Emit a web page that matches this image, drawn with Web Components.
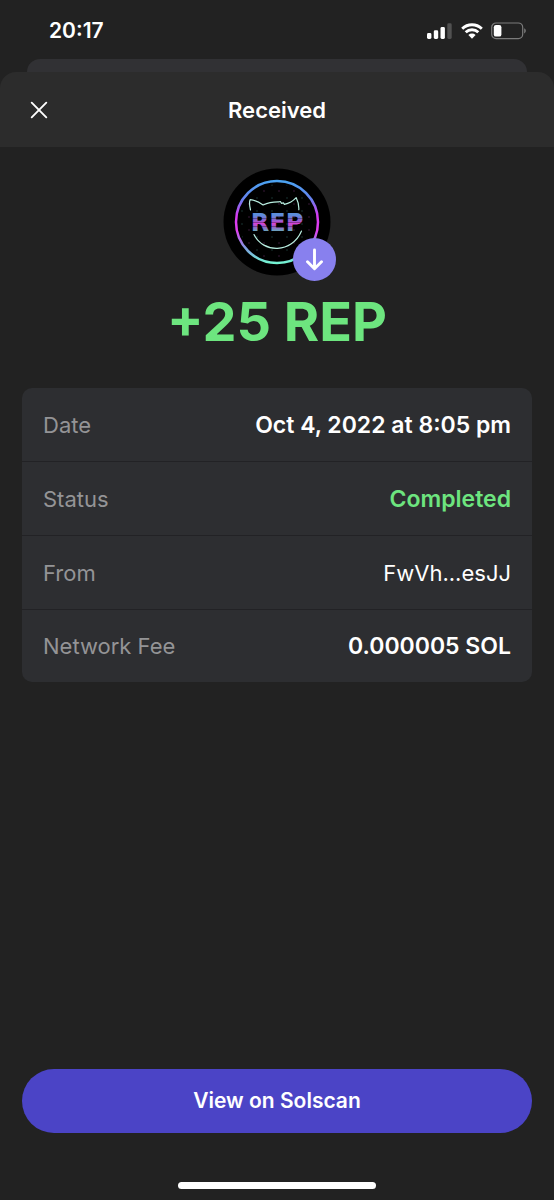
<!DOCTYPE html>
<html lang="en">
<head>
<meta charset="utf-8">
<meta name="viewport" content="width=device-width, initial-scale=1">
<title>Received</title>
<style>
  html { background: #222; }
  body {
    margin: 0;
    color: #fff;
    background: #222;
    font-family: Inter, "Liberation Sans", sans-serif;
    font-size: 22px;
    line-height: 28px;
    --green: #6de57f;
    --muted: #949496;
    --card: #2d2e31;
    --accent: #4b44c6;
  }
</style>
</head>
<body>
<wallet-screen>
  <status-bar slot="status">20:17</status-bar>
  <sheet-header slot="header">Received</sheet-header>
  <token-amount>+25 REP</token-amount>
  <transaction-details>
    <span slot="date">Oct 4, 2022 at 8:05 pm</span>
    <span slot="status">Completed</span>
    <span slot="from">FwVh...esJJ</span>
    <span slot="fee">0.000005 SOL</span>
  </transaction-details>
  <pill-button slot="footer">View on Solscan</pill-button>
</wallet-screen>

<script>
  const define = (name, html) => {
    const template = document.createElement('template');
    template.innerHTML = html;
    customElements.define(name, class extends HTMLElement {
      constructor() {
        super();
        this.attachShadow({ mode: 'open' }).append(template.content.cloneNode(true));
      }
    });
  };

  define('status-bar', `
    <style>
      :host { display: flex; align-items: center; justify-content: space-between; height: 59px; padding: 2px 28px 0 49px; box-sizing: border-box; font-size: 21px; font-weight: 600; }
      .icons { display: flex; align-items: center; gap: 8px; }
      svg { display: block; }
    </style>
    <time><slot></slot></time>
    <div class="icons">
      <svg width="26" height="16" viewBox="0 0 26 16" fill="#fff" aria-label="Signal">
        <rect x="0" y="10" width="4.400" height="6" rx="1.4"/>
        <rect x="6.8" y="7.3" width="4.400" height="8.7" rx="1.4"/>
        <rect x="13.5" y="4" width="4.400" height="12" rx="1.4"/>
        <rect x="20.3" y="0.3" width="4.400" height="15.7" rx="1.4" fill="#515151"/>
      </svg>
      <svg width="22" height="16" viewBox="0 0 22 16" aria-label="Wi-Fi">
        <g fill="none" stroke="#fff" stroke-width="2.9">
          <path d="M1.2 5.7a14 14 0 0 1 19.6 0"/>
          <path d="M4.7 9.3a9 9 0 0 1 12.6 0"/>
        </g>
        <path d="M7.4 12a5.2 5.2 0 0 1 7.2 0L11 15.8Z" fill="#fff"/>
      </svg>
      <svg width="35" height="18" viewBox="0 0 35 18" aria-label="Battery">
        <rect x="0.7" y="1" width="31" height="15.6" rx="4.4" fill="none" stroke="#7b7b7b" stroke-width="1.2"/>
        <rect x="2.8" y="3" width="7.6" height="11.6" rx="2.2" fill="#fff"/>
        <path d="M33.2 6.2v5.2c1-.4 1.6-1.400 1.600-2.600s-.6-2.200-1.600-2.600Z" fill="#7b7b7b"/>
      </svg>
    </div>
  `);

  define('sheet-header', `
    <style>
      :host { display: block; }
      .behind { height: 13px; margin: 0 27px; border-radius: 13px 13px 0 0; background: #313134; }
      header { display: grid; grid-template-columns: 78px 1fr 78px; align-items: center; height: 75px; border-radius: 16px 16px 0 0; background: #2c2c2c; }
      h1 { margin: 0; font: inherit; font-weight: 600; text-align: center; }
      button { display: grid; place-items: center; width: 78px; height: 75px; padding: 0; border: 0; background: none; cursor: pointer; }
    </style>
    <div class="behind"></div>
    <header>
      <button type="button" aria-label="Close">
        <svg width="18" height="18" viewBox="0 0 18 18" stroke="#fff" stroke-width="1.9" stroke-linecap="round"><path d="M1.700 1.700 16.300 16.300M16.300 1.700 1.700 16.300"/></svg>
      </button>
      <h1><slot></slot></h1>
    </header>
  `);

  define('token-logo', `
    <style>
      :host { display: block; position: relative; width: 108px; height: 108px; }
      svg { display: block; }
      .badge { position: absolute; right: -5px; bottom: -5px; }
    </style>
    <svg width="108" height="108" viewBox="0 0 108 108" role="img" aria-label="REP token">
      <defs>
        <linearGradient id="ring" x1="0" y1="0" x2="0" y2="1">
          <stop offset="0" stop-color="#4aa3f0"/><stop offset=".22" stop-color="#6681ee"/>
          <stop offset=".42" stop-color="#d53af0"/><stop offset=".6" stop-color="#e23ff0"/>
          <stop offset=".82" stop-color="#7d9ce0"/><stop offset="1" stop-color="#74f5d2"/>
        </linearGradient>
        <linearGradient id="word" gradientUnits="userSpaceOnUse" x1="0" y1="47" x2="0" y2="64">
          <stop offset="0" stop-color="#5c8edb"/><stop offset=".3" stop-color="#8a62cf"/>
          <stop offset=".5" stop-color="#d743d6"/><stop offset=".7" stop-color="#965fc9"/>
          <stop offset="1" stop-color="#5bb8b8"/>
        </linearGradient>
        <pattern id="dots" width="15" height="13" patternUnits="userSpaceOnUse">
          <circle cx="4" cy="4" r="1" fill="#10211f"/><circle cx="11" cy="10" r="1" fill="#241023"/>
        </pattern>
      </defs>
      <circle cx="54" cy="54" r="53.500" fill="#000"/>
      <circle cx="54" cy="54" r="38" fill="url(#dots)"/>
      <circle cx="54" cy="54" r="41" fill="none" stroke="url(#ring)" stroke-width="2.500"/>
      <g fill="none" stroke="#b8eee0" stroke-width="1.200" stroke-linecap="round" stroke-linejoin="round">
        <path d="M27.500 42c-1-4-1.600-7-.4-10.300 4 .3 9 2.300 13 5.300 5-2.400 10-3.300 15.500-3.200l1.800-.3 1 1.800 2-.4 1 1.500c5-1 8.600-3.200 11.800-6.700 2 4 2.900 8 2.600 12"/>
        <path d="M31 66.500c9 19 38 19 47.500-3.500"/>
      </g>
      <text x="54" y="63" text-anchor="middle" font-family="DejaVu Sans, sans-serif" font-weight="700" font-size="24" fill="url(#word)">REP</text>
      <path d="M26 50.500h56M26 54.500h56M26 58.500h56" stroke="#000" stroke-width=".5" opacity=".6"/>
    </svg>
    <svg class="badge" width="43" height="43" viewBox="0 0 43 43" aria-label="Received">
      <circle cx="21.500" cy="21.500" r="21.500" fill="#8880ee"/>
      <path d="M21.500 12v18M14.500 23.800l7 7 7-7" fill="none" stroke="#fff" stroke-width="2.900" stroke-linecap="round" stroke-linejoin="round"/>
    </svg>
  `);

  define('token-amount', `
    <style>
      :host { display: flex; flex-direction: column; align-items: center; gap: 12px; }
      p { margin: 0; color: var(--green); font-size: 54px; line-height: 68px; font-weight: 700; }
    </style>
    <token-logo></token-logo>
    <p><slot></slot></p>
  `);

  define('transaction-details', `
    <style>
      :host { display: block; overflow: hidden; border-radius: 10px; background: var(--card); }
      table { width: 100%; border-collapse: separate; border-spacing: 0; }
      th, td { height: 73px; padding: 0 21px; border-bottom: 1px solid #222225; }
      tr:last-child > * { height: 72px; border-bottom: 0; }
      th { text-align: left; font-weight: 400; color: var(--muted); }
      td { text-align: right; font-size: 23px; font-weight: 600; }
      .done { color: var(--green); }
      .address { font-size: 22px; font-weight: 400; }
    </style>
    <table>
      <tbody>
        <tr><th scope="row">Date</th><td><slot name="date"></slot></td></tr>
        <tr><th scope="row">Status</th><td class="done"><slot name="status"></slot></td></tr>
        <tr><th scope="row">From</th><td class="address"><slot name="from"></slot></td></tr>
        <tr><th scope="row">Network Fee</th><td><slot name="fee"></slot></td></tr>
      </tbody>
    </table>
  `);

  define('pill-button', `
    <style>
      :host { display: block; }
      button { display: block; width: 100%; height: 64px; padding: 0 24px; border: 0; border-radius: 32px; background: var(--accent); color: #fff; font: inherit; font-size: 21px; font-weight: 600; cursor: pointer; }
    </style>
    <button type="button"><slot></slot></button>
  `);

  define('wallet-screen', `
    <style>
      :host { display: flex; flex-direction: column; min-height: 100vh; }
      main { display: flex; flex-direction: column; gap: 32px; padding: 21px 22px; }
      footer { display: flex; flex-direction: column; gap: 49px; margin-top: auto; padding: 0 22px 11px; }
      .home { align-self: center; width: 198px; height: 7px; border-radius: 4px; background: #fff; }
    </style>
    <slot name="status"></slot>
    <slot name="header"></slot>
    <main><slot></slot></main>
    <footer><slot name="footer"></slot><div class="home"></div></footer>
  `);
</script>
</body>
</html>
